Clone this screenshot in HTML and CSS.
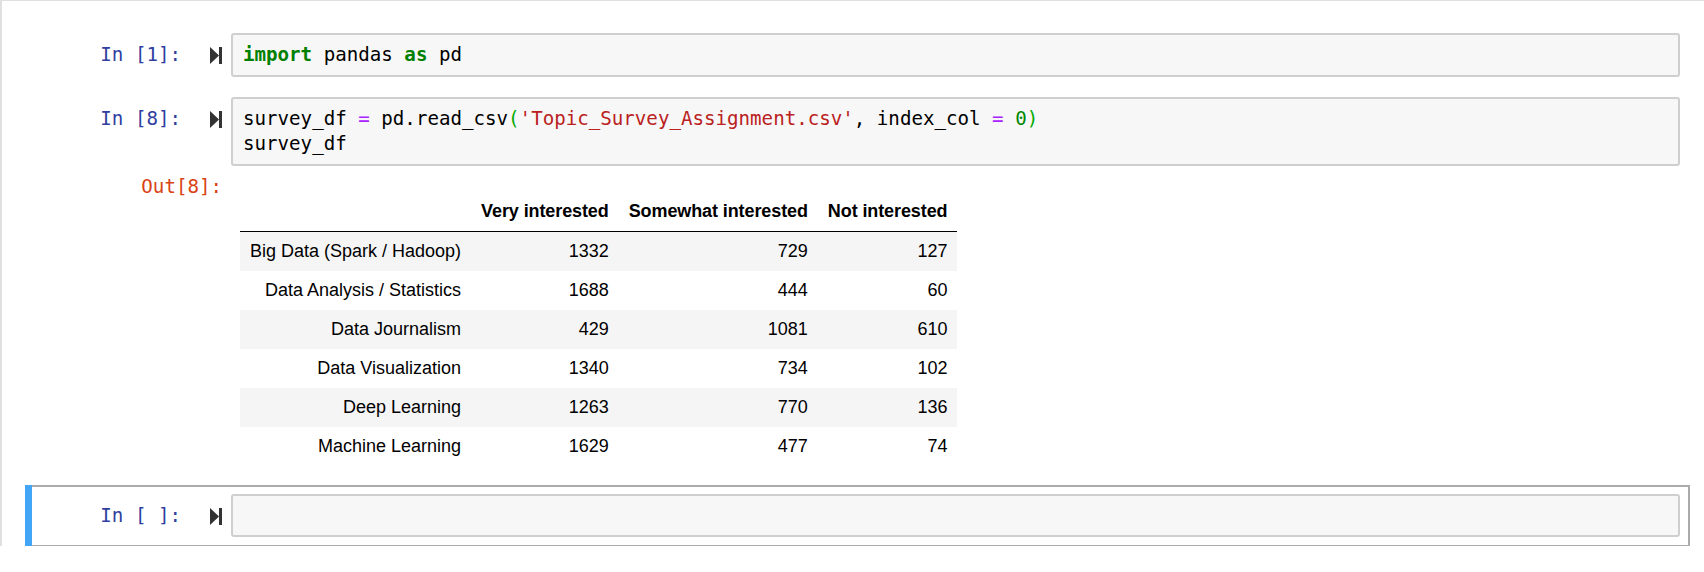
FILE: index.html
```html
<!DOCTYPE html>
<html>
<head>
<meta charset="utf-8">
<title>Notebook</title>
<link rel="stylesheet" href="styles.css">
</head>
<body>
<div class="notebook">
  <div class="cell">
    <div class="row">
      <div class="prompt in"><span>In [1]:</span><svg class="run" viewBox="0 0 12 17" width="12" height="17"><polygon points="0,0 9,8.5 0,17" fill="#333"/><rect x="9" y="0" width="3" height="17" fill="#333"/></svg></div>
      <div class="code"><span class="kw">import</span> pandas <span class="kw">as</span> pd</div>
    </div>
  </div>
  <div class="cell">
    <div class="row">
      <div class="prompt in"><span>In [8]:</span><svg class="run" viewBox="0 0 12 17" width="12" height="17"><polygon points="0,0 9,8.5 0,17" fill="#333"/><rect x="9" y="0" width="3" height="17" fill="#333"/></svg></div>
      <div class="code">survey_df <span class="op">=</span> pd.read_csv<span class="br">(</span><span class="str">'Topic_Survey_Assignment.csv'</span>, index_col <span class="op">=</span> <span class="num">0</span><span class="br">)</span>
survey_df</div>
    </div>
    <div class="row">
      <div class="prompt out"><span>Out[8]:</span></div>
      <div class="subarea">
        <table class="df">
          <thead>
            <tr><th></th><th>Very interested</th><th>Somewhat interested</th><th>Not interested</th></tr>
          </thead>
          <tbody>
            <tr><th>Big Data (Spark / Hadoop)</th><td>1332</td><td>729</td><td>127</td></tr>
            <tr><th>Data Analysis / Statistics</th><td>1688</td><td>444</td><td>60</td></tr>
            <tr><th>Data Journalism</th><td>429</td><td>1081</td><td>610</td></tr>
            <tr><th>Data Visualization</th><td>1340</td><td>734</td><td>102</td></tr>
            <tr><th>Deep Learning</th><td>1263</td><td>770</td><td>136</td></tr>
            <tr><th>Machine Learning</th><td>1629</td><td>477</td><td>74</td></tr>
          </tbody>
        </table>
      </div>
    </div>
  </div>
  <div class="cell selected">
    <div class="row">
      <div class="prompt in"><span>In [ ]:</span><svg class="run" viewBox="0 0 12 17" width="12" height="17"><polygon points="0,0 9,8.5 0,17" fill="#333"/><rect x="9" y="0" width="3" height="17" fill="#333"/></svg></div>
      <div class="code"> </div>
    </div>
  </div>
</div>
</body>
</html>
```

FILE: styles.css
```css
* { box-sizing: border-box; }

body {
  margin: 0;
  background: #fff;
  font-family: "Liberation Sans", Arial, sans-serif;
}

.notebook {
  height: 546px;
  overflow: hidden;
  border-top: 1px solid #e0e0e0;
  border-left: 2px solid #e0e0e0;
  padding-top: 23px;
}

.cell {
  position: relative;
  margin: 0 14px 2px 23px;
  border: 2px solid transparent;
  padding: 7px 8px 7px 0;
}

.cell.selected {
  border-color: #ababab;
  padding-bottom: 8px;
}

.cell.selected::before {
  content: "";
  position: absolute;
  left: -2px;
  top: -2px;
  bottom: -2px;
  width: 7px;
  background: #42a5f5;
}

.row {
  display: flex;
  align-items: flex-start;
}

.prompt {
  width: 204px;
  flex: none;
  display: flex;
  justify-content: flex-end;
  align-items: flex-start;
  padding-right: 9px;
  font-family: "DejaVu Sans Mono", "Liberation Mono", monospace;
  font-size: 19.15px;
  line-height: 25.5px;
  white-space: pre;
}

.prompt.in {
  padding-top: 9px;
  color: #303f9f;
}

.prompt.out {
  padding-top: 8px;
  color: #d84315;
}

.run {
  display: block;
  flex: none;
  margin-left: 29px;
  margin-top: 5px;
}

.code {
  flex: 1;
  min-width: 0;
  background: #f7f7f7;
  border: 2px solid #cfcfcf;
  border-radius: 3px;
  padding: 7px 10px;
  font-family: "DejaVu Sans Mono", "Liberation Mono", monospace;
  font-size: 19.15px;
  line-height: 25.5px;
  color: #000;
  white-space: pre;
  min-height: 43.5px;
}

.kw { color: #008000; font-weight: bold; }
.op { color: #aa22ff; }
.str { color: #ba2121; }
.num { color: #008800; }
.br { color: #00aa00; }

.subarea {
  flex: 1;
  padding: 26px 0 8px 9px;
}

.df {
  border-collapse: collapse;
  border: none;
  font-family: "Liberation Sans", Arial, sans-serif;
  font-size: 18px;
  color: #000;
}

.df th,
.df td {
  padding: 9px 10px;
  line-height: 21px;
  text-align: right;
  vertical-align: middle;
  white-space: nowrap;
}

.df thead th {
  font-weight: bold;
  letter-spacing: -0.1px;
  border-bottom: 1px solid #000;
}

.df tbody th {
  font-weight: normal;
}

.df tbody tr:nth-child(odd) {
  background: #f5f5f5;
}
```
